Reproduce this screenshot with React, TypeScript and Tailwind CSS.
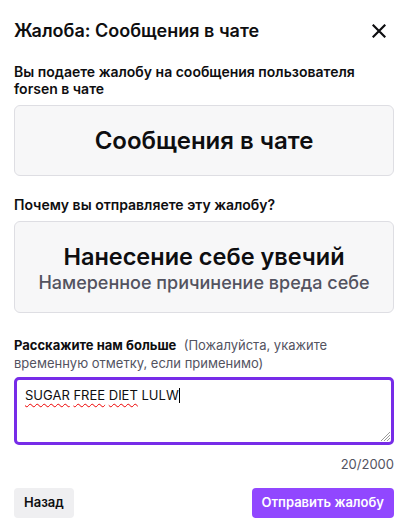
import React from "react";

export default function App() {
  return (
    <div
      className="w-[408px] h-[528px] bg-white text-[#0e0e10] px-[14px] flex flex-col overflow-hidden"
      style={{ fontFamily: "Inter, 'Noto Sans', sans-serif" }}
    >
      <div className="pt-[19px] flex items-center justify-between">
        <div className="text-[18px] leading-[24px] font-semibold">Жалоба: Сообщения в чате</div>
        <svg width="14" height="14" viewBox="0 0 14 14" className="mr-[8px]">
          <path d="M1.5 1.5 L12.5 12.5 M12.5 1.5 L1.5 12.5" stroke="#0e0e10" strokeWidth="2.2" strokeLinecap="square" />
        </svg>
      </div>
      <div className="mt-[20px] text-[14px] leading-[17px] font-semibold">
        Вы подаете жалобу на сообщения пользователя forsen в чате
      </div>
      <div className="mt-[8px] h-[71px] rounded-md border border-[#dedee3] bg-[#f7f7f8] flex items-center justify-center">
        <div className="text-[24px] leading-[28px] font-semibold">Сообщения в чате</div>
      </div>
      <div className="mt-[20px] text-[14px] leading-[17px] font-semibold">Почему вы отправляете эту жалобу?</div>
      <div className="mt-[8px] h-[92px] rounded-md border border-[#dedee3] bg-[#f7f7f8] flex flex-col items-center justify-center pt-[4px]">
        <div className="text-[23.5px] leading-[28px] font-semibold">Нанесение себе увечий</div>
        <div className="text-[18px] leading-[24px] font-medium text-[#53535f]">Намеренное причинение вреда себе</div>
      </div>
      <div className="mt-[23px] text-[13px] leading-[18px] text-[#53535f] pr-[40px]">
        <span className="font-bold text-[#0e0e10]">Расскажите нам больше</span>&nbsp; (Пожалуйста, укажите временную отметку, если применимо)
      </div>
      <div className="relative mt-[5px] h-[68px] rounded-[5px] border-[3px] border-[#772ce8] px-[8px] py-[6px] text-[13px] leading-[18px]">
        <span className="underline decoration-wavy decoration-[#e00] underline-offset-[3px] decoration-1">SUGAR</span>{" "}
        <span className="underline decoration-wavy decoration-[#e00] underline-offset-[3px] decoration-1">FREE</span>{" "}
        <span className="underline decoration-wavy decoration-[#e00] underline-offset-[3px] decoration-1">DIET</span> LULW
        <span className="inline-block w-[1px] h-[15px] bg-black align-[-3px]" />
        <svg width="10" height="10" viewBox="0 0 10 10" className="absolute right-[1px] bottom-[1px]">
          <path d="M10 1 L1 10 M10 4 L4 10 M10 7 L7 10" stroke="#9a9a9a" strokeWidth="1" />
        </svg>
      </div>
      <div className="mt-[11px] text-right text-[13px] leading-[17px] text-[#53535f]">20/2000</div>
      <div className="mt-[15px] flex justify-between">
        <div className="h-[30px] px-[10px] rounded-[4px] bg-[#efeff1] flex items-center text-[13px] font-semibold">Назад</div>
        <div className="h-[30px] px-[10px] rounded-[4px] bg-[#9147ff] text-white flex items-center text-[13px] font-semibold">Отправить жалобу</div>
      </div>
    </div>
  );
}
